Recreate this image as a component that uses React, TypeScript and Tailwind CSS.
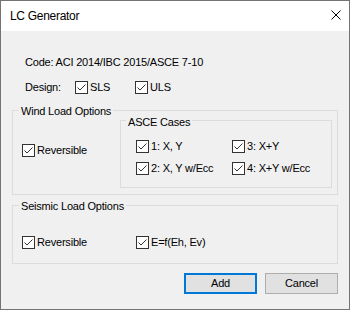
import React, { useState } from 'react';

const font = { fontFamily: '"Liberation Sans", Arial, sans-serif' };

function Check({ label, checked, onChange }: { label: string; checked: boolean; onChange: () => void }) {
    return (
        <label className="flex h-[13px] cursor-default items-center">
            <span
                onClick={onChange}
                className="flex h-[13px] w-[13px] shrink-0 items-center justify-center border border-[#333333] bg-white"
            >
                {checked && (
                    <svg width="11" height="11" viewBox="0 0 11 11">
                        <polyline points="1.5,5.5 4,8 9.5,2.5" fill="none" stroke="#333333" strokeWidth="1" />
                    </svg>
                )}
            </span>
            <span className="ml-[2px] whitespace-nowrap leading-[13px]">{label}</span>
        </label>
    );
}

function GroupLegend({ text, left, top }: { text: string; left: string; top: string }) {
    return <span className={`absolute ${left} ${top} bg-[#f0f0f0] px-[2px] leading-[13px] whitespace-nowrap`}>{text}</span>;
}

export default function App(): React.ReactElement {
    const [opts, setOpts] = useState<Record<string, boolean>>({
        sls: true,
        uls: true,
        windRev: true,
        c1: true,
        c2: true,
        c3: true,
        c4: true,
        seisRev: true,
        efn: true,
    });
    const toggle = (k: string) => () => setOpts((o) => ({ ...o, [k]: !o[k] }));

    return (
        <div
            className="flex h-[310px] w-[350px] flex-col border border-[#737373] text-[11px] tracking-[-0.2px] text-black"
            style={font}
        >
            {/* Title bar */}
            <div className="flex h-[30px] shrink-0 items-start justify-between bg-white">
                <span className="mt-[8px] pl-[9px] text-[12px] leading-[14px] tracking-[-0.3px]">LC Generator</span>
                <svg className="mt-[9px] mr-[8px]" width="10" height="10" viewBox="0 0 10 10">
                    <path d="M0.5 0.5 L9.5 9.5 M9.5 0.5 L0.5 9.5" stroke="#000" strokeWidth="1" />
                </svg>
            </div>

            {/* Body */}
            <div className="flex flex-1 flex-col bg-[#f0f0f0] px-[11px] pt-[25px]">
                <div className="ml-[13px] h-[13px] leading-[13px]">Code: ACI 2014/IBC 2015/ASCE 7-10</div>

                <div className="mt-[12px] ml-[13px] flex h-[13px] items-center">
                    <span className="w-[50px] leading-[13px]">Design:</span>
                    <div className="w-[60px]">
                        <Check label="SLS" checked={opts.sls} onChange={toggle('sls')} />
                    </div>
                    <Check label="ULS" checked={opts.uls} onChange={toggle('uls')} />
                </div>

                {/* Wind Load Options */}
                <div className="relative mt-[16px] flex h-[85px] border border-[#dcdcdc]">
                    <GroupLegend text="Wind Load Options" left="left-[6px]" top="-top-[6px]" />
                    <div className="w-[107px] shrink-0 pt-[33px] pl-[9px]">
                        <Check label="Reversible" checked={opts.windRev} onChange={toggle('windRev')} />
                    </div>
                    <div className="relative mt-[9px] mr-[5px] h-[68px] flex-1 border border-[#dcdcdc]">
                        <GroupLegend text="ASCE Cases" left="left-[5px]" top="-top-[5px]" />
                        <div className="grid grid-cols-[96px_auto] gap-y-[9px] pt-[19px] pl-[15px]">
                            <Check label="1: X, Y" checked={opts.c1} onChange={toggle('c1')} />
                            <Check label="3: X+Y" checked={opts.c3} onChange={toggle('c3')} />
                            <Check label="2: X, Y w/Ecc" checked={opts.c2} onChange={toggle('c2')} />
                            <Check label="4: X+Y w/Ecc" checked={opts.c4} onChange={toggle('c4')} />
                        </div>
                    </div>
                </div>

                {/* Seismic Load Options */}
                <div className="relative mt-[10px] flex h-[59px] border border-[#dcdcdc] pt-[30px] pl-[9px]">
                    <GroupLegend text="Seismic Load Options" left="left-[6px]" top="-top-[6px]" />
                    <div className="w-[114px]">
                        <Check label="Reversible" checked={opts.seisRev} onChange={toggle('seisRev')} />
                    </div>
                    <Check label="E=f(Eh, Ev)" checked={opts.efn} onChange={toggle('efn')} />
                </div>

                <div className="mt-[9px] flex justify-end gap-[8px]">
                    <button className="flex h-[21px] w-[73px] items-center justify-center border-2 border-[#0078d7] bg-[#e1e1e1] leading-[13px]">
                        Add
                    </button>
                    <button className="flex h-[21px] w-[73px] items-center justify-center border border-[#adadad] bg-[#e1e1e1] leading-[13px]">
                        Cancel
                    </button>
                </div>
            </div>
        </div>
    );
}
